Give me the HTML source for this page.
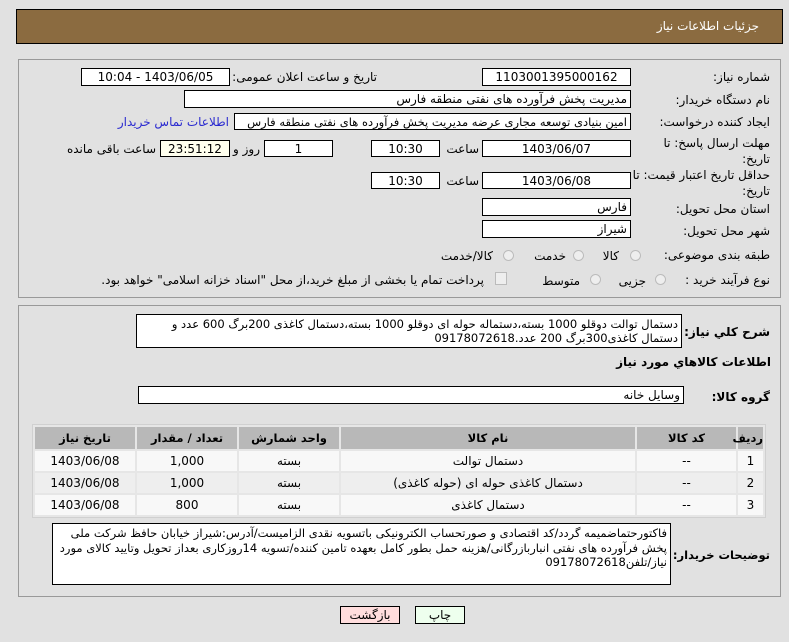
<!DOCTYPE html>
<html><head><meta charset="utf-8"><style>
body{margin:0;width:789px;height:642px;background:#e1e1e1;font-family:"DejaVu Sans","Noto Sans CJK SC",sans-serif;font-size:11.5px;color:#000;position:relative;overflow:hidden;direction:rtl}
.a{position:absolute;white-space:nowrap}
.box{position:absolute;background:#fff;border:1px solid #000;box-sizing:border-box;font-family:"DejaVu Sans",sans-serif;line-height:16px;font-size:12px}
.c{text-align:center}
.r{text-align:right;padding-right:3px}
.lbl{position:absolute;white-space:nowrap;font-size:12px}
.rad{position:absolute;width:11px;height:11px;border-radius:50%;border:1px solid #bbb;background:#eee;box-sizing:border-box}
table{position:absolute;left:32px;top:424px;width:734px;table-layout:fixed;border-collapse:separate;border-spacing:2px;background:#e6e6e6;border:1px solid #d0d0d0;font-size:12px}
th{background:#b8b8b8;height:22px;font-weight:bold;font-size:11.5px;padding:0}
td{height:20px;text-align:center;padding:0}
tr.o td{background:#f8f8f8} tr.e td{background:#eeeeee}
</style></head><body>
<div class="a" style="left:16px;top:9px;width:767px;height:35px;background:#8b6b40;border:1px solid #000;box-sizing:border-box"></div>
<div class="a" style="right:30px;top:19px;color:#fff;font-size:12px">جزئیات اطلاعات نیاز</div>

<div class="a" style="left:18px;top:59px;width:763px;height:239px;border:1px solid #999;box-sizing:border-box"></div>
<div class="lbl" style="right:19px;top:70px">شماره نیاز:</div>
<div class="box c" style="left:482px;top:68px;width:149px;height:18px">1103001395000162</div>
<div class="lbl" style="right:412px;top:70px">تاریخ و ساعت اعلان عمومی:</div>
<div class="box c" style="left:81px;top:68px;width:149px;height:18px">1403/06/05 - 10:04</div>

<div class="lbl" style="right:19px;top:93px">نام دستگاه خریدار:</div>
<div class="box r" style="left:184px;top:90px;width:447px;height:18px">مدیریت پخش فرآورده های نفتی منطقه فارس</div>

<div class="lbl" style="right:19px;top:115px">ایجاد کننده درخواست:</div>
<div class="box r" style="left:234px;top:113px;width:397px;height:17px;font-size:11.5px">امین بنیادی توسعه مجاری عرضه مدیریت پخش فرآورده های نفتی منطقه فارس</div>
<div class="lbl" style="right:560px;top:115px;color:#2a2ad0">اطلاعات تماس خریدار</div>

<div class="lbl" style="right:19px;top:135px;line-height:16px">مهلت ارسال پاسخ: تا<br>تاریخ:</div>
<div class="box c" style="left:482px;top:140px;width:149px;height:17px">1403/06/07</div>
<div class="lbl" style="right:310px;top:142px">ساعت</div>
<div class="box c" style="left:371px;top:140px;width:69px;height:17px">10:30</div>
<div class="box c" style="left:264px;top:140px;width:69px;height:17px">1</div>
<div class="lbl" style="right:529px;top:142px">روز و</div>
<div class="box c" style="left:160px;top:140px;width:70px;height:17px;background:#ffffee">23:51:12</div>
<div class="lbl" style="right:633px;top:142px">ساعت باقی مانده</div>

<div class="lbl" style="right:19px;top:167px;line-height:16px">حداقل تاریخ اعتبار قیمت: تا<br>تاریخ:</div>
<div class="box c" style="left:482px;top:172px;width:149px;height:17px">1403/06/08</div>
<div class="lbl" style="right:310px;top:174px">ساعت</div>
<div class="box c" style="left:371px;top:172px;width:69px;height:17px">10:30</div>

<div class="lbl" style="right:19px;top:202px">استان محل تحویل:</div>
<div class="box r" style="left:482px;top:198px;width:149px;height:18px">فارس</div>
<div class="lbl" style="right:19px;top:224px">شهر محل تحویل:</div>
<div class="box r" style="left:482px;top:220px;width:149px;height:18px">شیراز</div>

<div class="lbl" style="right:19px;top:248px">طبقه بندی موضوعی:</div>
<div class="rad" style="left:630px;top:250px"></div><div class="lbl" style="right:170px;top:249px">کالا</div>
<div class="rad" style="left:573px;top:250px"></div><div class="lbl" style="right:223px;top:249px">خدمت</div>
<div class="rad" style="left:503px;top:250px"></div><div class="lbl" style="right:296px;top:249px">کالا/خدمت</div>

<div class="lbl" style="right:19px;top:273px">نوع فرآیند خرید :</div>
<div class="rad" style="left:655px;top:274px"></div><div class="lbl" style="right:143px;top:274px">جزیی</div>
<div class="rad" style="left:590px;top:274px"></div><div class="lbl" style="right:209px;top:274px">متوسط</div>
<div class="a" style="left:495px;top:272px;width:10px;height:11px;border:1px solid #bbb;background:#eee"></div>
<div class="lbl" style="right:305px;top:273px">پرداخت تمام یا بخشی از مبلغ خرید،از محل "اسناد خزانه اسلامی" خواهد بود.</div>

<div class="a" style="left:18px;top:305px;width:763px;height:292px;border:1px solid #999;box-sizing:border-box"></div>
<div class="lbl" style="right:19px;top:325px;font-weight:bold">شرح کلي نياز:</div>
<div class="box" style="left:136px;top:314px;width:546px;height:34px;padding:2px 3px;white-space:normal;line-height:14px;font-size:11.5px;text-align:right">دستمال توالت دوقلو 1000 بسته،دستماله حوله ای دوقلو 1000 بسته،دستمال کاغذی 200برگ 600 عدد و دستمال کاغذی300برگ 200 عدد.09178072618</div>
<div class="lbl" style="right:18px;top:355px;font-weight:bold">اطلاعات کالاهاي مورد نياز</div>
<div class="lbl" style="right:19px;top:390px;font-weight:bold">گروه کالا:</div>
<div class="box r" style="left:138px;top:386px;width:546px;height:18px">وسایل خانه</div>

<table>
<colgroup><col style="width:25px"><col style="width:99px"><col><col style="width:100px"><col style="width:100px"><col style="width:100px"></colgroup>
<tr><th>رديف</th><th>کد کالا</th><th>نام کالا</th><th>واحد شمارش</th><th>تعداد / مقدار</th><th>تاریخ نیاز</th></tr>
<tr class="o"><td>1</td><td>--</td><td>دستمال توالت</td><td>بسته</td><td>1,000</td><td>1403/06/08</td></tr>
<tr class="e"><td>2</td><td>--</td><td>دستمال کاغذی حوله ای (حوله کاغذی)</td><td>بسته</td><td>1,000</td><td>1403/06/08</td></tr>
<tr class="o"><td>3</td><td>--</td><td>دستمال کاغذی</td><td>بسته</td><td>800</td><td>1403/06/08</td></tr>
</table>

<div class="lbl" style="right:19px;top:548px;font-weight:bold;font-size:11.5px">توضیحات خریدار:</div>
<div class="box" style="left:52px;top:523px;width:619px;height:62px;padding:2px 3px;white-space:normal;line-height:14.5px;font-size:11.5px;text-align:right">فاکتورحتماضمیمه گردد/کد اقتصادی و صورتحساب الکترونیکی باتسویه نقدی الزامیست/آدرس:شیراز خیابان حافظ شرکت ملی پخش فرآورده های نفتی انباربازرگانی/هزینه حمل بطور کامل بعهده تامین کننده/تسویه 14روزکاری بعداز تحویل وتایید کالای مورد نیاز/تلفن09178072618</div>

<div class="box c" style="left:340px;top:606px;width:60px;height:18px;background:#ffdddd;font-size:12px">بازگشت</div>
<div class="box c" style="left:415px;top:606px;width:50px;height:18px;background:#eeffee;font-size:12px">چاپ</div>
</body></html>
